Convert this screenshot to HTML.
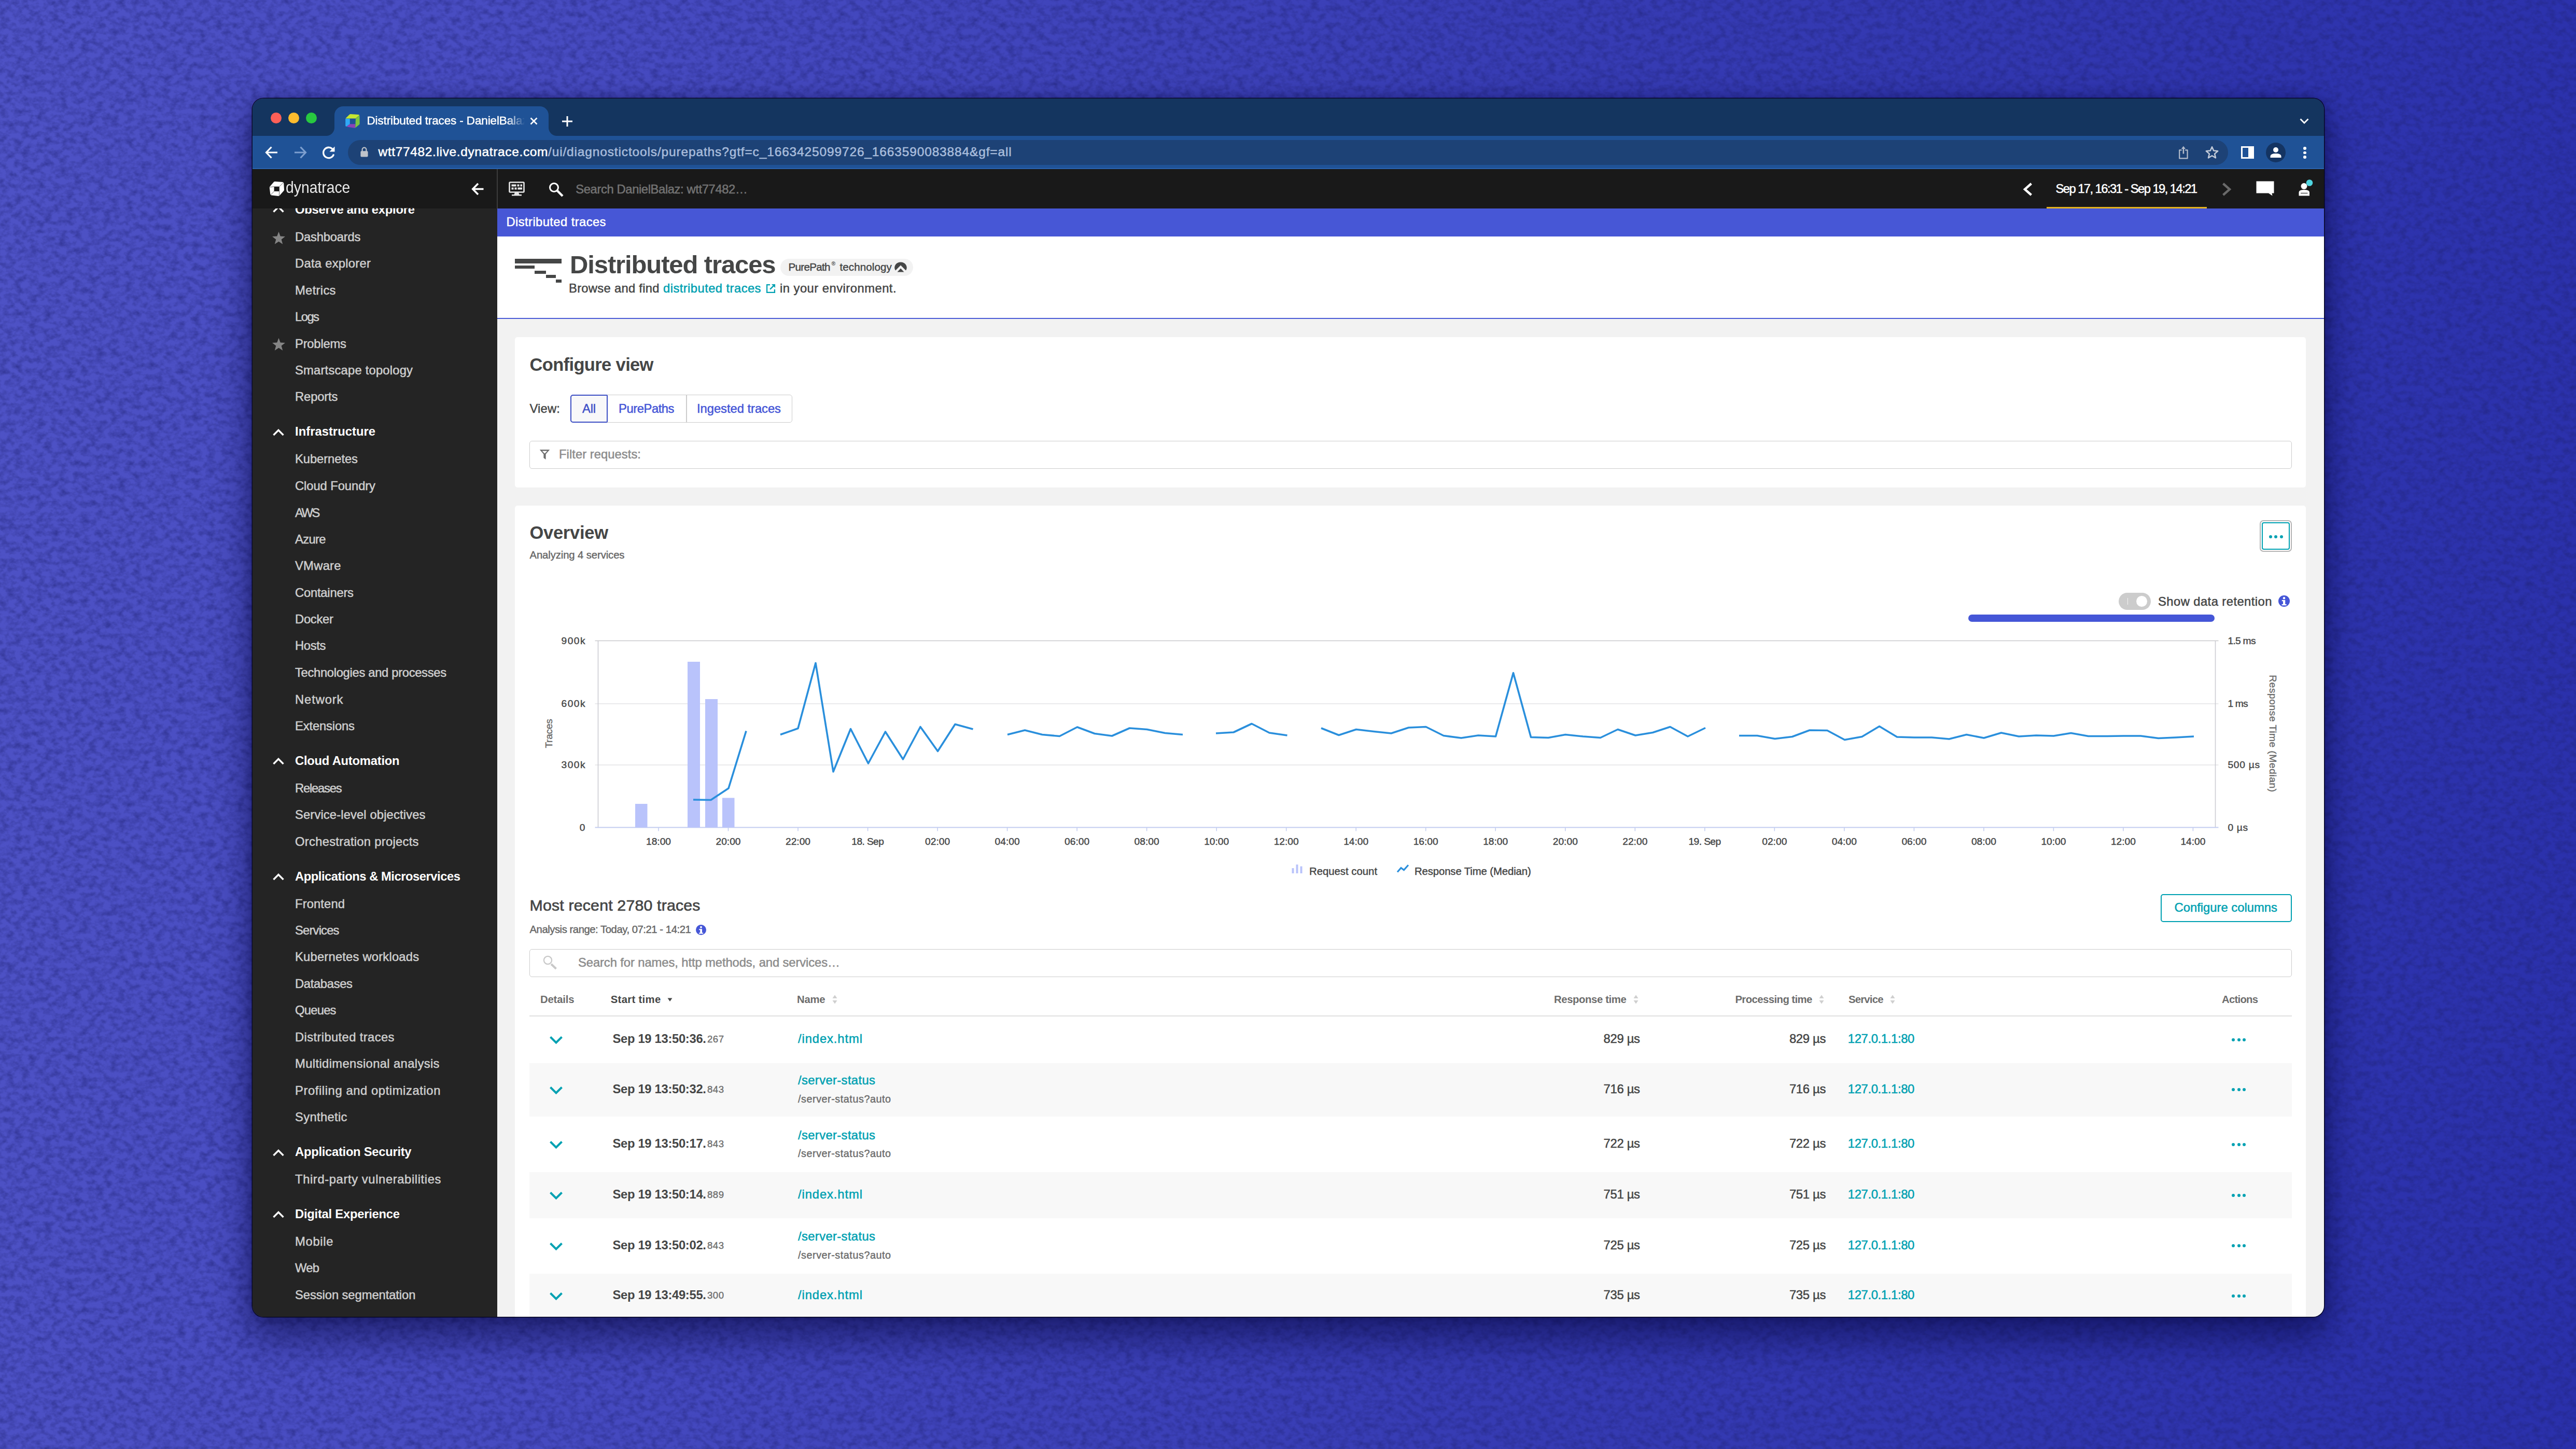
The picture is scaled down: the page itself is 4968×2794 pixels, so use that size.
<!DOCTYPE html>
<html lang="en"><head><meta charset="utf-8"><title>Distributed traces - DanielBalaz: wtt77482</title>
<style>
html,body{margin:0;padding:0}
body{width:4968px;height:2794px;overflow:hidden;position:relative;font-family:"Liberation Sans", sans-serif;background:linear-gradient(96deg,#4e52c5 0%,#464ac0 25%,#363bb3 60%,#2a30ab 100%)}
.win{position:absolute;left:486.5px;top:190px;width:3995.5px;height:2349px;border-radius:21px;overflow:hidden;box-shadow:0 0 0 1.5px rgba(0,0,10,.75),0 36px 70px 6px rgba(5,5,60,.55),0 0 24px rgba(5,5,60,.35)}
.in{position:absolute;left:-486.5px;top:-190px;width:4968px;height:2794px}
.in>div,.in>svg,.in>span{position:absolute}
.t{white-space:nowrap;display:block}
svg{overflow:visible}
</style></head><body>
<svg width="4968" height="2794" style="position:absolute;left:0;top:0"><filter id="nz" x="0" y="0" width="100%" height="100%" color-interpolation-filters="sRGB"><feTurbulence type="fractalNoise" baseFrequency="0.07 0.09" numOctaves="3" seed="7"/><feColorMatrix type="matrix" values="0 0 0 0 0.12  0 0 0 0 0.13  0 0 0 0 0.45  1.0 0 0 0 -0.38"/></filter><rect width="4968" height="2794" filter="url(#nz)"/></svg>
<div class="win"><div class="in">
<div style="left:486px;top:189px;width:3996px;height:74px;background:#14355f;"></div>
<div style="left:486px;top:262px;width:3996px;height:64px;background:#1f5296;"></div>
<div style="left:486px;top:324px;width:3996px;height:2px;background:#2b62ad;"></div>
<div style="left:645px;top:205px;width:413px;height:59px;background:#1f5296;border-radius:17px 17px 0 0;"></div>
<div style="left:629px;top:246px;width:16px;height:16px;background:radial-gradient(circle at 0 0,rgba(0,0,0,0) 15.5px,#1f5296 16.5px)"></div>
<div style="left:1058px;top:246px;width:16px;height:16px;background:radial-gradient(circle at 100% 0,rgba(0,0,0,0) 15.5px,#1f5296 16.5px)"></div>
<div style="left:522.0px;top:216.5px;width:21px;height:21px;border-radius:50%;background:#fe5f57"></div>
<div style="left:556.0px;top:216.5px;width:21px;height:21px;border-radius:50%;background:#febc2e"></div>
<div style="left:590.0px;top:216.5px;width:21px;height:21px;border-radius:50%;background:#28c840"></div>
<svg style="left:665.9px;top:220.3px;" width="28" height="27.5" viewBox="0 0 28 27.5">
<path d="M0.7 7.9 L8.3 0.6 Q9 0 10 0 L25.3 0.9 Q27.6 1.2 26.6 2.8 L19.8 8.5 L0.7 8.5 Z" fill="#c5e631"/>
<path d="M0.2 9 L8.8 9 L8.8 19.2 L2.4 23.9 Q0.2 24.2 0.2 22 Z" fill="#30a9f6"/>
<path d="M20 8.7 L27.4 2.6 L27.7 18.2 Q27.7 19.4 26.8 20.2 L19.2 26.6 L19.5 19 Z" fill="#7cc63f"/>
<path d="M8.8 19.3 L19.4 19.3 L18.8 26.9 L4.2 24.8 Q2.6 24.4 3.4 23.3 Z" fill="#8b43b6"/>
</svg>
<svg style="left:1022px;top:226px;" width="15" height="15" viewBox="0 0 15 15"><path d="M1.5 1.5 L13.5 13.5 M13.5 1.5 L1.5 13.5" stroke="#fff" stroke-width="2.6" fill="none"/></svg>
<svg style="left:1083px;top:223px;" width="22" height="22" viewBox="0 0 22 22"><path d="M11 1 V21 M1 11 H21" stroke="#fff" stroke-width="3" fill="none"/></svg>
<svg style="left:4435px;top:228px;" width="18" height="12" viewBox="0 0 18 12"><path d="M1.5 1.5 L9 9 L16.5 1.5" stroke="#fff" stroke-width="2.8" fill="none"/></svg>
<svg style="left:511px;top:282px;" width="25" height="24" viewBox="0 0 25 24"><path d="M24 12 H3 M12.5 1.5 L2.5 12 L12.5 22.5" stroke="#fff" stroke-width="3.2" fill="none"/></svg>
<svg style="left:567px;top:282px;" width="25" height="24" viewBox="0 0 25 24"><path d="M1 12 H22 M12.5 1.5 L22.5 12 L12.5 22.5" stroke="#7d9fcf" stroke-width="3.2" fill="none"/></svg>
<svg style="left:620px;top:281px;" width="28" height="27" viewBox="0 0 28 27"><path d="M22.5 8 A10.2 10.2 0 1 0 23.6 16.5" stroke="#fff" stroke-width="3.3" fill="none"/><path d="M25.5 1.5 V11.5 H15.5 Z" fill="#fff"/></svg>
<div style="left:671px;top:270px;width:3626px;height:48px;background:#1d4276;border-radius:24px;"></div>
<svg style="left:694.5px;top:283px;" width="15" height="20" viewBox="0 0 15 20"><rect x="0.4" y="8.2" width="14.2" height="11.3" rx="1.8" fill="#bfc3ca"/><path d="M3.6 9 V5.6 A3.9 3.9 0 0 1 11.4 5.6 V9" stroke="#bfc3ca" stroke-width="2.2" fill="none"/></svg>
<svg style="left:4200px;top:280px;" width="22" height="27" viewBox="0 0 22 27"><path d="M7.6 9.4 H3.2 V25.4 H18.6 V9.4 H14.2" stroke="#b4bccb" stroke-width="2.2" fill="none" stroke-linejoin="round"/><path d="M10.9 16.5 V5.5" stroke="#b4bccb" stroke-width="2.6" fill="none"/><path d="M6.8 7 L10.9 1.8 L15 7 Z" fill="#b4bccb"/></svg>
<svg style="left:4253px;top:281px;" width="26" height="25" viewBox="0 0 26 25"><path d="M13 2.2 L16.2 9.6 L24.2 10.3 L18.100000000000001 15.6 L20 23.4 L13 19.2 L6 23.4 L7.9 15.6 L1.8 10.3 L9.8 9.6 Z" stroke="#c3cbd8" stroke-width="2.5" fill="none" stroke-linejoin="round"/></svg>
<svg style="left:4322px;top:282px;" width="25" height="24" viewBox="0 0 25 24"><rect x="1.5" y="1.5" width="22" height="21" fill="none" stroke="#fff" stroke-width="3"/><rect x="14" y="1.5" width="9.5" height="21" fill="#fff"/></svg>
<div style="left:4370px;top:275px;width:38px;height:38px;border-radius:50%;background:#143462"></div>
<svg style="left:4378px;top:283px;" width="22" height="22" viewBox="0 0 22 22"><circle cx="11" cy="6" r="5" fill="#fff"/><path d="M0.5 21 V18.5 Q0.5 13 11 13 Q21.5 13 21.5 18.5 V21 Z" fill="#fff"/></svg>
<div style="left:4442.2px;top:283.2px;width:5.6px;height:5.6px;border-radius:50%;background:#fff"></div>
<div style="left:4442.2px;top:291.8px;width:5.6px;height:5.6px;border-radius:50%;background:#fff"></div>
<div style="left:4442.2px;top:300.2px;width:5.6px;height:5.6px;border-radius:50%;background:#fff"></div>
<div style="left:486px;top:401px;width:473px;height:2139px;background:#242424;"></div>
<div style="left:959px;top:401px;width:3523px;height:2139px;background:#f2f2f2;"></div>
<div style="left:959px;top:401px;width:3523px;height:56px;background:#4757d6;"></div>
<div style="left:959px;top:456px;width:3523px;height:157px;background:#ffffff;"></div>
<div style="left:959px;top:613px;width:3523px;height:2px;background:#4a5bd6;"></div>
<div style="left:993px;top:650px;width:3454px;height:290px;background:#ffffff;border-radius:5px;"></div>
<div style="left:993px;top:975px;width:3454px;height:1585px;background:#ffffff;border-radius:5px;"></div>
<svg style="left:525px;top:401px;overflow:hidden;" width="24" height="16" viewBox="0 0 24 16"><path d="M2.5 7.5 L12 -2 L21.5 7.5" stroke="#fff" stroke-width="3.4" fill="none"/></svg>
<svg style="left:524px;top:445.8px;" width="27" height="26" viewBox="0 0 26 25"><path d="M13 0.8 L16.1 9.2 L25 9.6 L18 15.2 L20.4 23.8 L13 18.9 L5.6 23.8 L8 15.2 L1 9.6 L9.9 9.2 Z" fill="#858585"/></svg>
<svg style="left:524px;top:651.3px;" width="27" height="26" viewBox="0 0 26 25"><path d="M13 0.8 L16.1 9.2 L25 9.6 L18 15.2 L20.4 23.8 L13 18.9 L5.6 23.8 L8 15.2 L1 9.6 L9.9 9.2 Z" fill="#858585"/></svg>
<svg style="left:525px;top:825.5px;" width="24" height="16" viewBox="0 0 24 16"><path d="M2.5 13 L12 3.5 L21.5 13" stroke="#fff" stroke-width="3.4" fill="none"/></svg>
<svg style="left:525px;top:1460px;" width="24" height="16" viewBox="0 0 24 16"><path d="M2.5 13 L12 3.5 L21.5 13" stroke="#fff" stroke-width="3.4" fill="none"/></svg>
<svg style="left:525px;top:1683px;" width="24" height="16" viewBox="0 0 24 16"><path d="M2.5 13 L12 3.5 L21.5 13" stroke="#fff" stroke-width="3.4" fill="none"/></svg>
<svg style="left:525px;top:2214.5px;" width="24" height="16" viewBox="0 0 24 16"><path d="M2.5 13 L12 3.5 L21.5 13" stroke="#fff" stroke-width="3.4" fill="none"/></svg>
<svg style="left:525px;top:2334px;" width="24" height="16" viewBox="0 0 24 16"><path d="M2.5 13 L12 3.5 L21.5 13" stroke="#fff" stroke-width="3.4" fill="none"/></svg>
<div style="left:486px;top:326px;width:3996px;height:75.5px;background:#191919;"></div>
<div style="left:958px;top:326px;width:1.5px;height:75.5px;background:#3c3c3c;"></div>
<svg style="left:519px;top:349px;" width="30" height="30" viewBox="0 0 30 30">
<path d="M9.4 1.6 Q10 0.9 11.2 0.9 L25.6 2 Q28 2.3 28.3 4.6 L29 16.8 Q29 18 28.2 18.9 L20 28.2 Q19.2 29 18 28.9 L4.6 27.6 Q2.6 27.3 2.3 25.3 L0.8 13 Q0.7 11.6 1.6 10.5 Z" fill="#fff"/>
<rect x="9.6" y="10.7" width="10.2" height="9.2" fill="#191919"/>
<path d="M19.8 10.7 L27.2 3.4 M9.6 19.9 L3.2 26.6 M9.6 10.7 L1.4 12 M19.8 19.9 L19.3 28.4" stroke="#191919" stroke-width="0.9" fill="none" opacity="0.75"/>
</svg>
<svg style="left:909px;top:351.5px;" width="24" height="25" viewBox="0 0 24 25"><path d="M23.5 12.5 H4 M13 2 L2.8 12.5 L13 23" stroke="#fff" stroke-width="3.6" fill="none"/></svg>
<svg style="left:981px;top:350px;" width="31" height="28" viewBox="0 0 31 28">
<rect x="1.5" y="1.5" width="28" height="19" rx="1.5" fill="none" stroke="#e6e6e6" stroke-width="2.6"/>
<rect x="5.5" y="5.5" width="9" height="4" fill="#e6e6e6"/><rect x="16.5" y="5.5" width="4" height="4" fill="#e6e6e6"/><rect x="22.5" y="5.5" width="3.5" height="4" fill="#e6e6e6"/>
<rect x="5.5" y="11.5" width="4" height="4" fill="#e6e6e6"/><rect x="11.5" y="11.5" width="4" height="4" fill="#e6e6e6"/><rect x="17.5" y="11.5" width="8.5" height="4" fill="#e6e6e6"/>
<path d="M12 21 H19 L20.5 25 H25 V27.5 H6 V25 H10.5 Z" fill="#e6e6e6"/>
</svg>
<svg style="left:1058px;top:351px;" width="29" height="28" viewBox="0 0 29 28"><circle cx="10.5" cy="10.5" r="8" fill="none" stroke="#fff" stroke-width="3"/><path d="M16.8 16.8 L27 27" stroke="#fff" stroke-width="4.4"/></svg>
<svg style="left:3901px;top:352px;" width="19" height="26" viewBox="0 0 19 26"><path d="M16.5 2 L4 13 L16.5 24" stroke="#fff" stroke-width="4.4" fill="none"/></svg>
<svg style="left:4285px;top:352px;" width="19" height="26" viewBox="0 0 19 26"><path d="M2.5 2 L15 13 L2.5 24" stroke="#6a6a6a" stroke-width="4.4" fill="none"/></svg>
<div style="left:3947px;top:398.5px;width:309px;height:3.5px;background:#e4b320;"></div>
<svg style="left:4351px;top:349px;" width="35" height="29" viewBox="0 0 35 29"><path d="M0.5 0.5 H34.5 V23.5 H30.5 L31.5 28.5 L24 23.5 H0.5 Z" fill="#fff"/></svg>
<svg style="left:4433px;top:346px;" width="28" height="33" viewBox="0 0 28 33"><circle cx="10.5" cy="13" r="6" fill="#fff"/><path d="M0.5 31.5 V25 Q0.5 20 10.5 20 Q21 20 21 25 V31.5 Z" fill="#fff"/><rect x="4" y="25.5" width="13.5" height="2.2" fill="#191919" opacity=".55"/><circle cx="21" cy="6.5" r="6.3" fill="#4fd5e0"/></svg>
<div style="left:993.3px;top:499.3px;width:89.29999999999995px;height:8.300000000000011px;background:#454646;"></div>
<div style="left:993.3px;top:512px;width:37.700000000000045px;height:6.2000000000000455px;background:#454646;"></div>
<div style="left:1031.3px;top:522px;width:21.40000000000009px;height:6.2000000000000455px;background:#454646;"></div>
<div style="left:1052.7px;top:530px;width:19.299999999999955px;height:6.2000000000000455px;background:#454646;"></div>
<div style="left:1072.2px;top:539.4px;width:10.399999999999864px;height:6.100000000000023px;background:#454646;"></div>
<div style="left:1505px;top:498.5px;width:255.5px;height:33.0px;background:#f2f2f2;border-radius:17px;"></div>
<svg style="left:1724.5px;top:505px;" width="24" height="20" viewBox="0 0 24 20"><path d="M12 0.5 A11.5 10.5 0 0 1 22 16.5 L12 6.5 L2 16.5 A11.5 10.5 0 0 1 12 0.5 Z" fill="#454646"/><path d="M5.5 19.5 L12 12.5 L18.5 19.5 Z" fill="#454646"/></svg>
<svg style="left:1476.5px;top:546.5px;" width="19" height="19" viewBox="0 0 20 20"><path d="M8.5 2.2 H2.2 V17.8 H17.8 V11.5" stroke="#00a1b2" stroke-width="2.4" fill="none"/><path d="M11.5 1 H19 V8.5 Z" fill="#00a1b2"/><path d="M16.5 3.5 L8.5 11.5" stroke="#00a1b2" stroke-width="2.6"/></svg>
<div style="left:1100px;top:760.5px;width:428px;height:54px;box-sizing:border-box;border:1.6px solid #cccccc;border-radius:5px;background:#fff"></div>
<div style="left:1323px;top:761px;width:1.599999999999909px;height:53px;background:#cccccc;"></div>
<div style="left:1100px;top:760.5px;width:71.5px;height:54px;box-sizing:border-box;border:2.2px solid #3d4fc4;border-radius:5px 2px 2px 5px;background:#f8f8f9"></div>
<div style="left:1021px;top:850px;width:3398.5px;height:54px;box-sizing:border-box;border:1.6px solid #cccccc;border-radius:5px;background:#fff"></div>
<svg style="left:1040px;top:866px;" width="21" height="21" viewBox="0 0 21 21"><path d="M0.8 1 H20.2 L12.600000000000001 9.8 V20 L8.4 17 V9.8 Z" fill="#6d6d6d"/><path d="M5.5 3.4 H15.5 L10.5 8.6 Z" fill="#fff"/></svg>
<div style="left:4358px;top:1003px;width:61.5px;height:61px;box-sizing:border-box;border:2.4px solid #b4b4b4;border-radius:7px;background:#fff"></div>
<div style="left:4362px;top:1007px;width:53.5px;height:53px;box-sizing:border-box;border:2px solid #00a1b2;border-radius:4px;background:#fff"></div>
<div style="left:4375.5px;top:1031.5px;width:6px;height:6px;border-radius:50%;background:#00a1b2"></div>
<div style="left:4386px;top:1031.5px;width:6px;height:6px;border-radius:50%;background:#00a1b2"></div>
<div style="left:4396.5px;top:1031.5px;width:6px;height:6px;border-radius:50%;background:#00a1b2"></div>
<div style="left:4086px;top:1142.5px;width:61.5px;height:33.5px;border-radius:17px;background:#cccccc"></div>
<div style="left:4119.5px;top:1148.5px;width:21.5px;height:21.5px;border-radius:50%;background:#fff"></div>
<div style="left:4102.5px;top:1153px;width:1.800000000000182px;height:13px;background:#f4f4f4;"></div>
<svg style="left:4394px;top:1147.5px;" width="22" height="22" viewBox="0 0 22 22"><circle cx="11" cy="11" r="11" fill="#4556d7"/><circle cx="11" cy="5.2" r="2.2" fill="#fff"/><path d="M6.8 9.0 H13.2 V17.1 H15.6 V19.2 H6.6 V17.1 H9.0 V11.2 H6.8 Z" fill="#fff"/></svg>
<div style="left:3796px;top:1185px;width:475px;height:14px;background:#4556d7;border-radius:7px;"></div>
<svg style="left:0;top:0" width="4968" height="2794" viewBox="0 0 4968 2794"><path d="M1147.5 1235.5 H4278.5" stroke="#c9c9cc" stroke-width="1.6" fill="none"/><path d="M1147.5 1357 H4278.5" stroke="#e3e3e6" stroke-width="1.6" fill="none"/><path d="M1147.5 1475 H4278.5" stroke="#e3e3e6" stroke-width="1.6" fill="none"/><path d="M1153.5 1235.5 V1595.5 M4272.5 1235.5 V1595.5" stroke="#cbcbd2" stroke-width="1.6" fill="none"/><path d="M1147.5 1595.5 H4278.5" stroke="#c3cdf0" stroke-width="1.8" fill="none"/><path d="M1270.0 1595.5 V1602.5" stroke="#c3cdf0" stroke-width="1.6"/><path d="M1404.5 1595.5 V1602.5" stroke="#c3cdf0" stroke-width="1.6"/><path d="M1539.0 1595.5 V1602.5" stroke="#c3cdf0" stroke-width="1.6"/><path d="M1673.6 1595.5 V1602.5" stroke="#c3cdf0" stroke-width="1.6"/><path d="M1808.1 1595.5 V1602.5" stroke="#c3cdf0" stroke-width="1.6"/><path d="M1942.6 1595.5 V1602.5" stroke="#c3cdf0" stroke-width="1.6"/><path d="M2077.1 1595.5 V1602.5" stroke="#c3cdf0" stroke-width="1.6"/><path d="M2211.6 1595.5 V1602.5" stroke="#c3cdf0" stroke-width="1.6"/><path d="M2346.2 1595.5 V1602.5" stroke="#c3cdf0" stroke-width="1.6"/><path d="M2480.7 1595.5 V1602.5" stroke="#c3cdf0" stroke-width="1.6"/><path d="M2615.2 1595.5 V1602.5" stroke="#c3cdf0" stroke-width="1.6"/><path d="M2749.7 1595.5 V1602.5" stroke="#c3cdf0" stroke-width="1.6"/><path d="M2884.2 1595.5 V1602.5" stroke="#c3cdf0" stroke-width="1.6"/><path d="M3018.8 1595.5 V1602.5" stroke="#c3cdf0" stroke-width="1.6"/><path d="M3153.3 1595.5 V1602.5" stroke="#c3cdf0" stroke-width="1.6"/><path d="M3287.8 1595.5 V1602.5" stroke="#c3cdf0" stroke-width="1.6"/><path d="M3422.3 1595.5 V1602.5" stroke="#c3cdf0" stroke-width="1.6"/><path d="M3556.8 1595.5 V1602.5" stroke="#c3cdf0" stroke-width="1.6"/><path d="M3691.4 1595.5 V1602.5" stroke="#c3cdf0" stroke-width="1.6"/><path d="M3825.9 1595.5 V1602.5" stroke="#c3cdf0" stroke-width="1.6"/><path d="M3960.4 1595.5 V1602.5" stroke="#c3cdf0" stroke-width="1.6"/><path d="M4094.9 1595.5 V1602.5" stroke="#c3cdf0" stroke-width="1.6"/><path d="M4229.4 1595.5 V1602.5" stroke="#c3cdf0" stroke-width="1.6"/><rect x="1225" y="1550" width="23.5" height="45.5" fill="#b9c3fb"/><rect x="1326" y="1276" width="24" height="319.5" fill="#b9c3fb"/><rect x="1360" y="1348" width="24" height="247.5" fill="#b9c3fb"/><rect x="1393" y="1538.5" width="23.5" height="57.0" fill="#b9c3fb"/><path d="M1337 1542 L1371 1542.5 L1405 1520 L1439 1409.5" stroke="#2a8fdc" stroke-width="3.6" fill="none" stroke-linejoin="round" stroke-linecap="butt"/><path d="M1505 1416.5 L1539 1404.5 L1573 1278.5 L1607 1488 L1640.5 1405.5 L1674.5 1472 L1707.5 1411 L1741.5 1464 L1775 1401.5 L1808.5 1448.5 L1842 1396.5 L1876.5 1406" stroke="#2a8fdc" stroke-width="3.6" fill="none" stroke-linejoin="round" stroke-linecap="butt"/><path d="M1943 1416.5 L1976.5 1408 L2010 1416.5 L2043.5 1419.5 L2077.5 1402 L2111 1414.5 L2144.5 1419 L2178.5 1404 L2212 1406.5 L2247 1413.5 L2281 1416.5" stroke="#2a8fdc" stroke-width="3.6" fill="none" stroke-linejoin="round" stroke-linecap="butt"/><path d="M2345 1414 L2379 1412 L2414 1395.5 L2448 1413 L2482.5 1418" stroke="#2a8fdc" stroke-width="3.6" fill="none" stroke-linejoin="round" stroke-linecap="butt"/><path d="M2548 1404 L2582 1417.5 L2615.5 1406.5 L2649.5 1410.5 L2683 1414 L2716.5 1403 L2750 1401.5 L2784 1418.5 L2818 1423 L2851 1418 L2884.5 1420 L2918.5 1297.5 L2952.5 1421.5 L2986 1422.5 L3019 1416.5 L3053 1420 L3086.5 1422.5 L3120 1406.5 L3154 1418 L3187.5 1412.5 L3221 1401.5 L3255 1420 L3289 1403.5" stroke="#2a8fdc" stroke-width="3.6" fill="none" stroke-linejoin="round" stroke-linecap="butt"/><path d="M3354 1418.5 L3389 1418.5 L3423 1424.5 L3456.5 1420.5 L3490 1408 L3524 1408.5 L3557.5 1426.5 L3591 1420.5 L3624.5 1400.5 L3658.5 1421 L3692 1422 L3725.5 1422 L3759 1425 L3792.5 1416.5 L3826 1423 L3859.5 1413 L3893.5 1420 L3927 1418 L3960.5 1419 L3994 1413.5 L4027.5 1419.5 L4061.5 1419.5 L4095 1419 L4128.5 1419 L4162.5 1423.5 L4196 1422 L4231 1420" stroke="#2a8fdc" stroke-width="3.6" fill="none" stroke-linejoin="round" stroke-linecap="butt"/></svg>
<svg style="left:2491px;top:1666px;" width="22" height="18" viewBox="0 0 22 18"><rect x="0.5" y="8" width="4" height="10" fill="#b9c3fb"/><rect x="8.5" y="1" width="4" height="17" fill="#b9c3fb"/><rect x="16.5" y="4.5" width="4" height="13.5" fill="#b9c3fb"/></svg>
<svg style="left:2694px;top:1666px;" width="23" height="18" viewBox="0 0 23 18"><path d="M1 15.5 L8 7.5 L13.5 11.5 L22 2" stroke="#2a8fdc" stroke-width="3.2" fill="none"/></svg>
<svg style="left:1341.5px;top:1782.5px;" width="20" height="20" viewBox="0 0 20 20"><circle cx="10" cy="10" r="10" fill="#4556d7"/><circle cx="10" cy="4.7" r="2.0" fill="#fff"/><path d="M6.2 8.2 H12.0 V15.5 H14.2 V17.5 H6.0 V15.5 H8.2 V10.2 H6.2 Z" fill="#fff"/></svg>
<div style="left:4166.5px;top:1723.5px;width:253.5px;height:54px;box-sizing:border-box;border:2px solid #00a1b2;border-radius:5px;background:#fff"></div>
<div style="left:1021px;top:1830px;width:3399px;height:54px;box-sizing:border-box;border:1.6px solid #cccccc;border-radius:5px;background:#fff"></div>
<svg style="left:1047px;top:1842px;" width="28" height="28" viewBox="0 0 28 28"><circle cx="9.5" cy="9.5" r="7.6" fill="none" stroke="#c8c8c8" stroke-width="2.2"/><path d="M16 17 L25.5 26" stroke="#c8c8c8" stroke-width="4"/></svg>
<svg style="left:1287px;top:1923.5px;" width="10" height="8" viewBox="0 0 10 8"><path d="M0.5 0.5 H9.5 L5 7 Z" fill="#454646"/></svg>
<svg style="left:1605px;top:1917.5px;" width="10" height="18" viewBox="0 0 10 18"><path d="M5 0.5 L9.5 7 H0.5 Z" fill="#cfcfcf"/><path d="M5 17.5 L9.5 11 H0.5 Z" fill="#cfcfcf"/></svg>
<svg style="left:3150px;top:1917.5px;" width="10" height="18" viewBox="0 0 10 18"><path d="M5 0.5 L9.5 7 H0.5 Z" fill="#cfcfcf"/><path d="M5 17.5 L9.5 11 H0.5 Z" fill="#cfcfcf"/></svg>
<svg style="left:3508.3px;top:1917.5px;" width="10" height="18" viewBox="0 0 10 18"><path d="M5 0.5 L9.5 7 H0.5 Z" fill="#cfcfcf"/><path d="M5 17.5 L9.5 11 H0.5 Z" fill="#cfcfcf"/></svg>
<svg style="left:3645px;top:1917.5px;" width="10" height="18" viewBox="0 0 10 18"><path d="M5 0.5 L9.5 7 H0.5 Z" fill="#cfcfcf"/><path d="M5 17.5 L9.5 11 H0.5 Z" fill="#cfcfcf"/></svg>
<div style="left:1021px;top:1958px;width:3399px;height:1.599999999999909px;background:#e0e0e0;"></div>
<svg style="left:1059px;top:1997.0px;" width="27" height="17" viewBox="0 0 27 17"><path d="M2.5 2.5 L13.5 13.5 L24.5 2.5" stroke="#00a1b2" stroke-width="4" fill="none"/></svg>
<div style="left:4304px;top:2001.5px;width:6px;height:6px;border-radius:50%;background:#00a1b2"></div>
<div style="left:4314.5px;top:2001.5px;width:6px;height:6px;border-radius:50%;background:#00a1b2"></div>
<div style="left:4325px;top:2001.5px;width:6px;height:6px;border-radius:50%;background:#00a1b2"></div>
<div style="left:1021px;top:2049.6px;width:3399px;height:103.90000000000009px;background:#f8f8f8;"></div>
<svg style="left:1059px;top:2093.5px;" width="27" height="17" viewBox="0 0 27 17"><path d="M2.5 2.5 L13.5 13.5 L24.5 2.5" stroke="#00a1b2" stroke-width="4" fill="none"/></svg>
<div style="left:4304px;top:2098px;width:6px;height:6px;border-radius:50%;background:#00a1b2"></div>
<div style="left:4314.5px;top:2098px;width:6px;height:6px;border-radius:50%;background:#00a1b2"></div>
<div style="left:4325px;top:2098px;width:6px;height:6px;border-radius:50%;background:#00a1b2"></div>
<svg style="left:1059px;top:2199.0px;" width="27" height="17" viewBox="0 0 27 17"><path d="M2.5 2.5 L13.5 13.5 L24.5 2.5" stroke="#00a1b2" stroke-width="4" fill="none"/></svg>
<div style="left:4304px;top:2203.5px;width:6px;height:6px;border-radius:50%;background:#00a1b2"></div>
<div style="left:4314.5px;top:2203.5px;width:6px;height:6px;border-radius:50%;background:#00a1b2"></div>
<div style="left:4325px;top:2203.5px;width:6px;height:6px;border-radius:50%;background:#00a1b2"></div>
<div style="left:1021px;top:2260px;width:3399px;height:88.59999999999991px;background:#f8f8f8;"></div>
<svg style="left:1059px;top:2297.0px;" width="27" height="17" viewBox="0 0 27 17"><path d="M2.5 2.5 L13.5 13.5 L24.5 2.5" stroke="#00a1b2" stroke-width="4" fill="none"/></svg>
<div style="left:4304px;top:2301.5px;width:6px;height:6px;border-radius:50%;background:#00a1b2"></div>
<div style="left:4314.5px;top:2301.5px;width:6px;height:6px;border-radius:50%;background:#00a1b2"></div>
<div style="left:4325px;top:2301.5px;width:6px;height:6px;border-radius:50%;background:#00a1b2"></div>
<svg style="left:1059px;top:2394.5px;" width="27" height="17" viewBox="0 0 27 17"><path d="M2.5 2.5 L13.5 13.5 L24.5 2.5" stroke="#00a1b2" stroke-width="4" fill="none"/></svg>
<div style="left:4304px;top:2399px;width:6px;height:6px;border-radius:50%;background:#00a1b2"></div>
<div style="left:4314.5px;top:2399px;width:6px;height:6px;border-radius:50%;background:#00a1b2"></div>
<div style="left:4325px;top:2399px;width:6px;height:6px;border-radius:50%;background:#00a1b2"></div>
<div style="left:1021px;top:2455.5px;width:3399px;height:104.5px;background:#f8f8f8;"></div>
<svg style="left:1059px;top:2491.0px;" width="27" height="17" viewBox="0 0 27 17"><path d="M2.5 2.5 L13.5 13.5 L24.5 2.5" stroke="#00a1b2" stroke-width="4" fill="none"/></svg>
<div style="left:4304px;top:2495.5px;width:6px;height:6px;border-radius:50%;background:#00a1b2"></div>
<div style="left:4314.5px;top:2495.5px;width:6px;height:6px;border-radius:50%;background:#00a1b2"></div>
<div style="left:4325px;top:2495.5px;width:6px;height:6px;border-radius:50%;background:#00a1b2"></div>
<span class="t" style="top:217.1px;font-size:22.5px;line-height:31px;color:#ffffff;-webkit-text-stroke:0.49px;letter-spacing:-0.13px;left:707.5px;width:306px;overflow:hidden;-webkit-mask-image:linear-gradient(90deg,#000 270px,rgba(0,0,0,0) 304px);mask-image:linear-gradient(90deg,#000 270px,rgba(0,0,0,0) 304px);">Distributed traces - DanielBalaz: wtt77482</span>
<span class="t" style="top:276.2px;font-size:24.5px;line-height:34px;color:#ffffff;-webkit-text-stroke:0.54px;letter-spacing:0.63px;left:729.6px;">wtt77482.live.dynatrace.com</span>
<span class="t" style="top:276.2px;font-size:24.5px;line-height:34px;color:#a8bcdb;-webkit-text-stroke:0.54px;letter-spacing:0.85px;left:1057.0px;">/ui/diagnostictools/purepaths?gtf=c_1663425099726_1663590083884&amp;gf=all</span>
<span class="t" style="top:386.6px;font-size:23.8px;line-height:33px;color:#ffffff;font-weight:700;letter-spacing:-0.25px;left:569.0px;clip-path:inset(15px 0 0 0);">Observe and explore</span>
<span class="t" style="top:440.1px;font-size:23.8px;line-height:33px;color:#cecece;-webkit-text-stroke:0.52px;letter-spacing:-0.20px;left:569.0px;">Dashboards</span>
<span class="t" style="top:491.1px;font-size:23.8px;line-height:33px;color:#cecece;-webkit-text-stroke:0.52px;letter-spacing:0.26px;left:569.0px;">Data explorer</span>
<span class="t" style="top:542.6px;font-size:23.8px;line-height:33px;color:#cecece;-webkit-text-stroke:0.52px;letter-spacing:0.30px;left:569.0px;">Metrics</span>
<span class="t" style="top:594.1px;font-size:23.8px;line-height:33px;color:#cecece;-webkit-text-stroke:0.52px;letter-spacing:-1.53px;left:569.0px;">Logs</span>
<span class="t" style="top:645.6px;font-size:23.8px;line-height:33px;color:#cecece;-webkit-text-stroke:0.52px;letter-spacing:-0.22px;left:569.0px;">Problems</span>
<span class="t" style="top:696.6px;font-size:23.8px;line-height:33px;color:#cecece;-webkit-text-stroke:0.52px;letter-spacing:0.19px;left:569.0px;">Smartscape topology</span>
<span class="t" style="top:748.1px;font-size:23.8px;line-height:33px;color:#cecece;-webkit-text-stroke:0.52px;letter-spacing:-0.14px;left:569.0px;">Reports</span>
<span class="t" style="top:815.1px;font-size:23.8px;line-height:33px;color:#ffffff;font-weight:700;letter-spacing:0.02px;left:569.0px;">Infrastructure</span>
<span class="t" style="top:868.1px;font-size:23.8px;line-height:33px;color:#cecece;-webkit-text-stroke:0.52px;letter-spacing:-0.08px;left:569.0px;">Kubernetes</span>
<span class="t" style="top:920.1px;font-size:23.8px;line-height:33px;color:#cecece;-webkit-text-stroke:0.52px;letter-spacing:-0.09px;left:569.0px;">Cloud Foundry</span>
<span class="t" style="top:971.6px;font-size:23.8px;line-height:33px;color:#cecece;-webkit-text-stroke:0.52px;letter-spacing:-2.50px;left:569.0px;">AWS</span>
<span class="t" style="top:1022.6px;font-size:23.8px;line-height:33px;color:#cecece;-webkit-text-stroke:0.52px;letter-spacing:-0.67px;left:569.0px;">Azure</span>
<span class="t" style="top:1074.1px;font-size:23.8px;line-height:33px;color:#cecece;-webkit-text-stroke:0.52px;letter-spacing:0.25px;left:569.0px;">VMware</span>
<span class="t" style="top:1125.6px;font-size:23.8px;line-height:33px;color:#cecece;-webkit-text-stroke:0.52px;letter-spacing:-0.23px;left:569.0px;">Containers</span>
<span class="t" style="top:1177.1px;font-size:23.8px;line-height:33px;color:#cecece;-webkit-text-stroke:0.52px;letter-spacing:-0.28px;left:569.0px;">Docker</span>
<span class="t" style="top:1228.1px;font-size:23.8px;line-height:33px;color:#cecece;-webkit-text-stroke:0.52px;letter-spacing:-0.33px;left:569.0px;">Hosts</span>
<span class="t" style="top:1280.1px;font-size:23.8px;line-height:33px;color:#cecece;-webkit-text-stroke:0.52px;letter-spacing:-0.33px;left:569.0px;">Technologies and processes</span>
<span class="t" style="top:1331.6px;font-size:23.8px;line-height:33px;color:#cecece;-webkit-text-stroke:0.52px;letter-spacing:0.87px;left:569.0px;">Network</span>
<span class="t" style="top:1382.6px;font-size:23.8px;line-height:33px;color:#cecece;-webkit-text-stroke:0.52px;letter-spacing:-0.16px;left:569.0px;">Extensions</span>
<span class="t" style="top:1449.6px;font-size:23.8px;line-height:33px;color:#ffffff;font-weight:700;letter-spacing:-0.25px;left:569.0px;">Cloud Automation</span>
<span class="t" style="top:1502.6px;font-size:23.8px;line-height:33px;color:#cecece;-webkit-text-stroke:0.52px;letter-spacing:-1.24px;left:569.0px;">Releases</span>
<span class="t" style="top:1554.1px;font-size:23.8px;line-height:33px;color:#cecece;-webkit-text-stroke:0.52px;letter-spacing:0.12px;left:569.0px;">Service-level objectives</span>
<span class="t" style="top:1606.1px;font-size:23.8px;line-height:33px;color:#cecece;-webkit-text-stroke:0.52px;letter-spacing:0.27px;left:569.0px;">Orchestration projects</span>
<span class="t" style="top:1672.6px;font-size:23.8px;line-height:33px;color:#ffffff;font-weight:700;letter-spacing:-0.48px;left:569.0px;">Applications &amp; Microservices</span>
<span class="t" style="top:1725.6px;font-size:23.8px;line-height:33px;color:#cecece;-webkit-text-stroke:0.52px;letter-spacing:0.11px;left:569.0px;">Frontend</span>
<span class="t" style="top:1776.6px;font-size:23.8px;line-height:33px;color:#cecece;-webkit-text-stroke:0.52px;letter-spacing:-0.82px;left:569.0px;">Services</span>
<span class="t" style="top:1828.1px;font-size:23.8px;line-height:33px;color:#cecece;-webkit-text-stroke:0.52px;letter-spacing:0.19px;left:569.0px;">Kubernetes workloads</span>
<span class="t" style="top:1879.6px;font-size:23.8px;line-height:33px;color:#cecece;-webkit-text-stroke:0.52px;letter-spacing:-0.35px;left:569.0px;">Databases</span>
<span class="t" style="top:1931.1px;font-size:23.8px;line-height:33px;color:#cecece;-webkit-text-stroke:0.52px;letter-spacing:-0.77px;left:569.0px;">Queues</span>
<span class="t" style="top:1982.6px;font-size:23.8px;line-height:33px;color:#cecece;-webkit-text-stroke:0.52px;letter-spacing:0.37px;left:569.0px;">Distributed traces</span>
<span class="t" style="top:2034.1px;font-size:23.8px;line-height:33px;color:#cecece;-webkit-text-stroke:0.52px;letter-spacing:0.36px;left:569.0px;">Multidimensional analysis</span>
<span class="t" style="top:2085.6px;font-size:23.8px;line-height:33px;color:#cecece;-webkit-text-stroke:0.52px;letter-spacing:0.58px;left:569.0px;">Profiling and optimization</span>
<span class="t" style="top:2136.6px;font-size:23.8px;line-height:33px;color:#cecece;-webkit-text-stroke:0.52px;letter-spacing:0.33px;left:569.0px;">Synthetic</span>
<span class="t" style="top:2204.1px;font-size:23.8px;line-height:33px;color:#ffffff;font-weight:700;letter-spacing:-0.29px;left:569.0px;">Application Security</span>
<span class="t" style="top:2257.1px;font-size:23.8px;line-height:33px;color:#cecece;-webkit-text-stroke:0.52px;letter-spacing:0.60px;left:569.0px;">Third-party vulnerabilities</span>
<span class="t" style="top:2323.6px;font-size:23.8px;line-height:33px;color:#ffffff;font-weight:700;letter-spacing:-0.25px;left:569.0px;">Digital Experience</span>
<span class="t" style="top:2376.6px;font-size:23.8px;line-height:33px;color:#cecece;-webkit-text-stroke:0.52px;letter-spacing:0.68px;left:569.0px;">Mobile</span>
<span class="t" style="top:2428.1px;font-size:23.8px;line-height:33px;color:#cecece;-webkit-text-stroke:0.52px;letter-spacing:-0.75px;left:569.0px;">Web</span>
<span class="t" style="top:2480.1px;font-size:23.8px;line-height:33px;color:#cecece;-webkit-text-stroke:0.52px;letter-spacing:-0.09px;left:569.0px;">Session segmentation</span>
<span class="t" style="top:339.2px;font-size:32px;line-height:45px;color:#e9e9e9;left:551.0px;transform:scaleX(0.885);transform-origin:0 50%;">dynatrace</span>
<span class="t" style="top:348.1px;font-size:23.8px;line-height:33px;color:#737373;-webkit-text-stroke:0.52px;letter-spacing:-0.40px;left:1110.3px;">Search DanielBalaz: wtt77482…</span>
<span class="t" style="top:347.1px;font-size:23.8px;line-height:33px;color:#ffffff;-webkit-text-stroke:0.52px;letter-spacing:-1.57px;left:3964.5px;">Sep 17, 16:31 - Sep 19, 14:21</span>
<span class="t" style="top:411.1px;font-size:23.8px;line-height:33px;color:#ffffff;-webkit-text-stroke:0.52px;letter-spacing:0.40px;left:976.5px;">Distributed traces</span>
<span class="t" style="top:475.9px;font-size:49px;line-height:69px;color:#454646;font-weight:700;letter-spacing:-1.12px;left:1099.0px;">Distributed traces</span>
<span class="t" style="top:499.8px;font-size:20.6px;line-height:29px;color:#454646;-webkit-text-stroke:0.45px;letter-spacing:-0.69px;left:1520.5px;">PurePath</span>
<span class="t" style="top:500.6px;font-size:10.5px;line-height:15px;color:#454646;font-weight:700;left:1603.5px;">®</span>
<span class="t" style="top:499.8px;font-size:20.6px;line-height:29px;color:#454646;-webkit-text-stroke:0.45px;letter-spacing:0.08px;left:1619.5px;">technology</span>
<span class="t" style="top:539.1px;font-size:23.8px;line-height:33px;color:#454646;-webkit-text-stroke:0.52px;letter-spacing:0.28px;left:1097.0px;">Browse and find</span>
<span class="t" style="top:539.1px;font-size:23.8px;line-height:33px;color:#00a1b2;-webkit-text-stroke:0.52px;letter-spacing:0.43px;left:1279.0px;">distributed traces</span>
<span class="t" style="top:539.1px;font-size:23.8px;line-height:33px;color:#454646;-webkit-text-stroke:0.52px;letter-spacing:0.47px;left:1504.0px;">in your environment.</span>
<span class="t" style="top:678.6px;font-size:34.5px;line-height:48px;color:#454646;font-weight:700;letter-spacing:-0.64px;left:1021.5px;">Configure view</span>
<span class="t" style="top:771.1px;font-size:23.8px;line-height:33px;color:#454646;-webkit-text-stroke:0.52px;letter-spacing:0.18px;left:1021.5px;">View:</span>
<span class="t" style="top:771.1px;font-size:23.8px;line-height:33px;color:#3f50c8;-webkit-text-stroke:0.52px;letter-spacing:-0.22px;left:1123.0px;">All</span>
<span class="t" style="top:771.1px;font-size:23.8px;line-height:33px;color:#4556d7;-webkit-text-stroke:0.52px;letter-spacing:-0.45px;left:1193.0px;">PurePaths</span>
<span class="t" style="top:771.1px;font-size:23.8px;line-height:33px;color:#4556d7;-webkit-text-stroke:0.52px;letter-spacing:-0.05px;left:1344.0px;">Ingested traces</span>
<span class="t" style="top:859.1px;font-size:23.8px;line-height:33px;color:#8c8c8c;-webkit-text-stroke:0.52px;letter-spacing:0.04px;left:1078.0px;">Filter requests:</span>
<span class="t" style="top:1002.6px;font-size:34.5px;line-height:48px;color:#454646;font-weight:700;letter-spacing:-0.28px;left:1021.5px;">Overview</span>
<span class="t" style="top:1056.1px;font-size:20.3px;line-height:28px;color:#686868;-webkit-text-stroke:0.45px;letter-spacing:-0.10px;left:1021.5px;">Analyzing 4 services</span>
<span class="t" style="top:1142.6px;font-size:23.8px;line-height:33px;color:#454646;-webkit-text-stroke:0.52px;letter-spacing:0.43px;left:4162.0px;">Show data retention</span>
<span class="t" style="top:1221.6px;font-size:19.2px;line-height:27px;color:#454646;-webkit-text-stroke:0.42px;letter-spacing:1.46px;right:3838.0px;">900k</span>
<span class="t" style="top:1343.1px;font-size:19.2px;line-height:27px;color:#454646;-webkit-text-stroke:0.42px;letter-spacing:1.46px;right:3838.0px;">600k</span>
<span class="t" style="top:1461.1px;font-size:19.2px;line-height:27px;color:#454646;-webkit-text-stroke:0.42px;letter-spacing:1.46px;right:3838.0px;">300k</span>
<span class="t" style="top:1581.6px;font-size:19.2px;line-height:27px;color:#454646;-webkit-text-stroke:0.42px;right:3839.5px;">0</span>
<span class="t" style="top:1221.6px;font-size:19.2px;line-height:27px;color:#454646;-webkit-text-stroke:0.42px;letter-spacing:-0.72px;left:4296.5px;">1.5 ms</span>
<span class="t" style="top:1343.1px;font-size:19.2px;line-height:27px;color:#454646;-webkit-text-stroke:0.42px;letter-spacing:-0.86px;left:4296.5px;">1 ms</span>
<span class="t" style="top:1461.1px;font-size:19.2px;line-height:27px;color:#454646;-webkit-text-stroke:0.42px;letter-spacing:0.70px;left:4296.5px;">500 µs</span>
<span class="t" style="top:1581.6px;font-size:19.2px;line-height:27px;color:#454646;-webkit-text-stroke:0.42px;letter-spacing:0.62px;left:4296.5px;">0 µs</span>
<span class="t" style="top:1608.6px;font-size:19.2px;line-height:27px;color:#454646;-webkit-text-stroke:0.42px;left:270.0px;width:2000px;text-align:center;">18:00</span>
<span class="t" style="top:1608.6px;font-size:19.2px;line-height:27px;color:#454646;-webkit-text-stroke:0.42px;left:404.5px;width:2000px;text-align:center;">20:00</span>
<span class="t" style="top:1608.6px;font-size:19.2px;line-height:27px;color:#454646;-webkit-text-stroke:0.42px;left:539.0px;width:2000px;text-align:center;">22:00</span>
<span class="t" style="top:1608.6px;font-size:19.2px;line-height:27px;color:#454646;-webkit-text-stroke:0.42px;letter-spacing:-0.61px;left:673.3px;width:2000px;text-align:center;">18. Sep</span>
<span class="t" style="top:1608.6px;font-size:19.2px;line-height:27px;color:#454646;-webkit-text-stroke:0.42px;left:808.1px;width:2000px;text-align:center;">02:00</span>
<span class="t" style="top:1608.6px;font-size:19.2px;line-height:27px;color:#454646;-webkit-text-stroke:0.42px;left:942.6px;width:2000px;text-align:center;">04:00</span>
<span class="t" style="top:1608.6px;font-size:19.2px;line-height:27px;color:#454646;-webkit-text-stroke:0.42px;left:1077.1px;width:2000px;text-align:center;">06:00</span>
<span class="t" style="top:1608.6px;font-size:19.2px;line-height:27px;color:#454646;-webkit-text-stroke:0.42px;left:1211.6px;width:2000px;text-align:center;">08:00</span>
<span class="t" style="top:1608.6px;font-size:19.2px;line-height:27px;color:#454646;-webkit-text-stroke:0.42px;left:1346.2px;width:2000px;text-align:center;">10:00</span>
<span class="t" style="top:1608.6px;font-size:19.2px;line-height:27px;color:#454646;-webkit-text-stroke:0.42px;left:1480.7px;width:2000px;text-align:center;">12:00</span>
<span class="t" style="top:1608.6px;font-size:19.2px;line-height:27px;color:#454646;-webkit-text-stroke:0.42px;left:1615.2px;width:2000px;text-align:center;">14:00</span>
<span class="t" style="top:1608.6px;font-size:19.2px;line-height:27px;color:#454646;-webkit-text-stroke:0.42px;left:1749.7px;width:2000px;text-align:center;">16:00</span>
<span class="t" style="top:1608.6px;font-size:19.2px;line-height:27px;color:#454646;-webkit-text-stroke:0.42px;left:1884.2px;width:2000px;text-align:center;">18:00</span>
<span class="t" style="top:1608.6px;font-size:19.2px;line-height:27px;color:#454646;-webkit-text-stroke:0.42px;left:2018.8px;width:2000px;text-align:center;">20:00</span>
<span class="t" style="top:1608.6px;font-size:19.2px;line-height:27px;color:#454646;-webkit-text-stroke:0.42px;left:2153.3px;width:2000px;text-align:center;">22:00</span>
<span class="t" style="top:1608.6px;font-size:19.2px;line-height:27px;color:#454646;-webkit-text-stroke:0.42px;letter-spacing:-0.61px;left:2287.5px;width:2000px;text-align:center;">19. Sep</span>
<span class="t" style="top:1608.6px;font-size:19.2px;line-height:27px;color:#454646;-webkit-text-stroke:0.42px;left:2422.3px;width:2000px;text-align:center;">02:00</span>
<span class="t" style="top:1608.6px;font-size:19.2px;line-height:27px;color:#454646;-webkit-text-stroke:0.42px;left:2556.8px;width:2000px;text-align:center;">04:00</span>
<span class="t" style="top:1608.6px;font-size:19.2px;line-height:27px;color:#454646;-webkit-text-stroke:0.42px;left:2691.4px;width:2000px;text-align:center;">06:00</span>
<span class="t" style="top:1608.6px;font-size:19.2px;line-height:27px;color:#454646;-webkit-text-stroke:0.42px;left:2825.9px;width:2000px;text-align:center;">08:00</span>
<span class="t" style="top:1608.6px;font-size:19.2px;line-height:27px;color:#454646;-webkit-text-stroke:0.42px;left:2960.4px;width:2000px;text-align:center;">10:00</span>
<span class="t" style="top:1608.6px;font-size:19.2px;line-height:27px;color:#454646;-webkit-text-stroke:0.42px;left:3094.9px;width:2000px;text-align:center;">12:00</span>
<span class="t" style="top:1608.6px;font-size:19.2px;line-height:27px;color:#454646;-webkit-text-stroke:0.42px;left:3229.4px;width:2000px;text-align:center;">14:00</span>
<span class="t" style="top:1400.6px;font-size:19.2px;line-height:27px;color:#6d6d6d;-webkit-text-stroke:0.42px;letter-spacing:-0.29px;left:58.4px;width:2000px;text-align:center;transform:rotate(-90deg);">Traces</span>
<span class="t" style="top:1401.1px;font-size:19.2px;line-height:27px;color:#6d6d6d;-webkit-text-stroke:0.42px;letter-spacing:0.54px;left:3382.8px;width:2000px;text-align:center;transform:rotate(90deg);">Response Time (Median)</span>
<span class="t" style="top:1665.6px;font-size:20.3px;line-height:28px;color:#454646;-webkit-text-stroke:0.45px;letter-spacing:0.02px;left:2525.0px;">Request count</span>
<span class="t" style="top:1665.6px;font-size:20.3px;line-height:28px;color:#454646;-webkit-text-stroke:0.45px;letter-spacing:-0.09px;left:2728.0px;">Response Time (Median)</span>
<span class="t" style="top:1725.1px;font-size:30.3px;line-height:42px;color:#454646;-webkit-text-stroke:0.67px;letter-spacing:0.18px;left:1021.5px;">Most recent 2780 traces</span>
<span class="t" style="top:1778.1px;font-size:20.3px;line-height:28px;color:#686868;-webkit-text-stroke:0.45px;letter-spacing:-0.46px;left:1021.5px;">Analysis range: Today, 07:21 - 14:21</span>
<span class="t" style="top:1733.1px;font-size:23.8px;line-height:33px;color:#00a1b2;-webkit-text-stroke:0.52px;left:4193.5px;">Configure columns</span>
<span class="t" style="top:1838.6px;font-size:23.8px;line-height:33px;color:#8c8c8c;-webkit-text-stroke:0.52px;letter-spacing:-0.10px;left:1115.0px;">Search for names, http methods, and services…</span>
<span class="t" style="top:1912.6px;font-size:20.3px;line-height:28px;color:#6d6d6d;font-weight:700;letter-spacing:-0.17px;left:1042.0px;">Details</span>
<span class="t" style="top:1912.6px;font-size:20.3px;line-height:28px;color:#454646;font-weight:700;letter-spacing:0.33px;left:1177.7px;">Start time</span>
<span class="t" style="top:1912.6px;font-size:20.3px;line-height:28px;color:#6d6d6d;font-weight:700;letter-spacing:-0.25px;left:1537.0px;">Name</span>
<span class="t" style="top:1912.6px;font-size:20.3px;line-height:28px;color:#6d6d6d;font-weight:700;letter-spacing:-0.38px;left:2997.0px;">Response time</span>
<span class="t" style="top:1912.6px;font-size:20.3px;line-height:28px;color:#6d6d6d;font-weight:700;letter-spacing:-0.55px;left:3346.4px;">Processing time</span>
<span class="t" style="top:1912.6px;font-size:20.3px;line-height:28px;color:#6d6d6d;font-weight:700;letter-spacing:-0.78px;left:3565.0px;">Service</span>
<span class="t" style="top:1912.6px;font-size:20.3px;line-height:28px;color:#6d6d6d;font-weight:700;letter-spacing:-0.73px;left:4285.0px;">Actions</span>
<span class="t" style="top:1986.1px;font-size:23.8px;line-height:33px;color:#454646;font-weight:700;letter-spacing:-0.31px;left:1181.4px;">Sep 19 13:50:36.</span>
<span class="t" style="top:1991.1px;font-size:18.6px;line-height:26px;color:#6f6f6f;-webkit-text-stroke:0.41px;letter-spacing:0.49px;left:1364.0px;">267</span>
<span class="t" style="top:1986.1px;font-size:23.8px;line-height:33px;color:#00a1b2;-webkit-text-stroke:0.52px;letter-spacing:0.89px;left:1539.0px;">/index.html</span>
<span class="t" style="top:1986.1px;font-size:23.8px;line-height:33px;color:#454646;-webkit-text-stroke:0.52px;letter-spacing:-0.29px;right:1805.3px;">829 µs</span>
<span class="t" style="top:1986.1px;font-size:23.8px;line-height:33px;color:#454646;-webkit-text-stroke:0.52px;letter-spacing:-0.29px;right:1446.9px;">829 µs</span>
<span class="t" style="top:1986.1px;font-size:23.8px;line-height:33px;color:#00a1b2;-webkit-text-stroke:0.52px;letter-spacing:-0.35px;left:3563.8px;">127.0.1.1:80</span>
<span class="t" style="top:2082.6px;font-size:23.8px;line-height:33px;color:#454646;font-weight:700;letter-spacing:-0.31px;left:1181.4px;">Sep 19 13:50:32.</span>
<span class="t" style="top:2087.6px;font-size:18.6px;line-height:26px;color:#6f6f6f;-webkit-text-stroke:0.41px;letter-spacing:0.49px;left:1364.0px;">843</span>
<span class="t" style="top:2066.3px;font-size:23.8px;line-height:33px;color:#00a1b2;-webkit-text-stroke:0.52px;letter-spacing:0.37px;left:1539.0px;">/server-status</span>
<span class="t" style="top:2104.5px;font-size:19.8px;line-height:28px;color:#6d6d6d;-webkit-text-stroke:0.44px;letter-spacing:0.54px;left:1539.0px;">/server-status?auto</span>
<span class="t" style="top:2082.6px;font-size:23.8px;line-height:33px;color:#454646;-webkit-text-stroke:0.52px;letter-spacing:-0.29px;right:1805.3px;">716 µs</span>
<span class="t" style="top:2082.6px;font-size:23.8px;line-height:33px;color:#454646;-webkit-text-stroke:0.52px;letter-spacing:-0.29px;right:1446.9px;">716 µs</span>
<span class="t" style="top:2082.6px;font-size:23.8px;line-height:33px;color:#00a1b2;-webkit-text-stroke:0.52px;letter-spacing:-0.35px;left:3563.8px;">127.0.1.1:80</span>
<span class="t" style="top:2188.1px;font-size:23.8px;line-height:33px;color:#454646;font-weight:700;letter-spacing:-0.31px;left:1181.4px;">Sep 19 13:50:17.</span>
<span class="t" style="top:2193.1px;font-size:18.6px;line-height:26px;color:#6f6f6f;-webkit-text-stroke:0.41px;letter-spacing:0.49px;left:1364.0px;">843</span>
<span class="t" style="top:2171.8px;font-size:23.8px;line-height:33px;color:#00a1b2;-webkit-text-stroke:0.52px;letter-spacing:0.37px;left:1539.0px;">/server-status</span>
<span class="t" style="top:2210.0px;font-size:19.8px;line-height:28px;color:#6d6d6d;-webkit-text-stroke:0.44px;letter-spacing:0.54px;left:1539.0px;">/server-status?auto</span>
<span class="t" style="top:2188.1px;font-size:23.8px;line-height:33px;color:#454646;-webkit-text-stroke:0.52px;letter-spacing:-0.29px;right:1805.3px;">722 µs</span>
<span class="t" style="top:2188.1px;font-size:23.8px;line-height:33px;color:#454646;-webkit-text-stroke:0.52px;letter-spacing:-0.29px;right:1446.9px;">722 µs</span>
<span class="t" style="top:2188.1px;font-size:23.8px;line-height:33px;color:#00a1b2;-webkit-text-stroke:0.52px;letter-spacing:-0.35px;left:3563.8px;">127.0.1.1:80</span>
<span class="t" style="top:2286.1px;font-size:23.8px;line-height:33px;color:#454646;font-weight:700;letter-spacing:-0.31px;left:1181.4px;">Sep 19 13:50:14.</span>
<span class="t" style="top:2291.1px;font-size:18.6px;line-height:26px;color:#6f6f6f;-webkit-text-stroke:0.41px;letter-spacing:0.49px;left:1364.0px;">889</span>
<span class="t" style="top:2286.1px;font-size:23.8px;line-height:33px;color:#00a1b2;-webkit-text-stroke:0.52px;letter-spacing:0.89px;left:1539.0px;">/index.html</span>
<span class="t" style="top:2286.1px;font-size:23.8px;line-height:33px;color:#454646;-webkit-text-stroke:0.52px;letter-spacing:-0.29px;right:1805.3px;">751 µs</span>
<span class="t" style="top:2286.1px;font-size:23.8px;line-height:33px;color:#454646;-webkit-text-stroke:0.52px;letter-spacing:-0.29px;right:1446.9px;">751 µs</span>
<span class="t" style="top:2286.1px;font-size:23.8px;line-height:33px;color:#00a1b2;-webkit-text-stroke:0.52px;letter-spacing:-0.35px;left:3563.8px;">127.0.1.1:80</span>
<span class="t" style="top:2383.6px;font-size:23.8px;line-height:33px;color:#454646;font-weight:700;letter-spacing:-0.31px;left:1181.4px;">Sep 19 13:50:02.</span>
<span class="t" style="top:2388.6px;font-size:18.6px;line-height:26px;color:#6f6f6f;-webkit-text-stroke:0.41px;letter-spacing:0.49px;left:1364.0px;">843</span>
<span class="t" style="top:2367.3px;font-size:23.8px;line-height:33px;color:#00a1b2;-webkit-text-stroke:0.52px;letter-spacing:0.37px;left:1539.0px;">/server-status</span>
<span class="t" style="top:2405.5px;font-size:19.8px;line-height:28px;color:#6d6d6d;-webkit-text-stroke:0.44px;letter-spacing:0.54px;left:1539.0px;">/server-status?auto</span>
<span class="t" style="top:2383.6px;font-size:23.8px;line-height:33px;color:#454646;-webkit-text-stroke:0.52px;letter-spacing:-0.29px;right:1805.3px;">725 µs</span>
<span class="t" style="top:2383.6px;font-size:23.8px;line-height:33px;color:#454646;-webkit-text-stroke:0.52px;letter-spacing:-0.29px;right:1446.9px;">725 µs</span>
<span class="t" style="top:2383.6px;font-size:23.8px;line-height:33px;color:#00a1b2;-webkit-text-stroke:0.52px;letter-spacing:-0.35px;left:3563.8px;">127.0.1.1:80</span>
<span class="t" style="top:2480.1px;font-size:23.8px;line-height:33px;color:#454646;font-weight:700;letter-spacing:-0.31px;left:1181.4px;">Sep 19 13:49:55.</span>
<span class="t" style="top:2485.1px;font-size:18.6px;line-height:26px;color:#6f6f6f;-webkit-text-stroke:0.41px;letter-spacing:0.49px;left:1364.0px;">300</span>
<span class="t" style="top:2480.1px;font-size:23.8px;line-height:33px;color:#00a1b2;-webkit-text-stroke:0.52px;letter-spacing:0.89px;left:1539.0px;">/index.html</span>
<span class="t" style="top:2480.1px;font-size:23.8px;line-height:33px;color:#454646;-webkit-text-stroke:0.52px;letter-spacing:-0.29px;right:1805.3px;">735 µs</span>
<span class="t" style="top:2480.1px;font-size:23.8px;line-height:33px;color:#454646;-webkit-text-stroke:0.52px;letter-spacing:-0.29px;right:1446.9px;">735 µs</span>
<span class="t" style="top:2480.1px;font-size:23.8px;line-height:33px;color:#00a1b2;-webkit-text-stroke:0.52px;letter-spacing:-0.35px;left:3563.8px;">127.0.1.1:80</span>
</div></div>
</body></html>
